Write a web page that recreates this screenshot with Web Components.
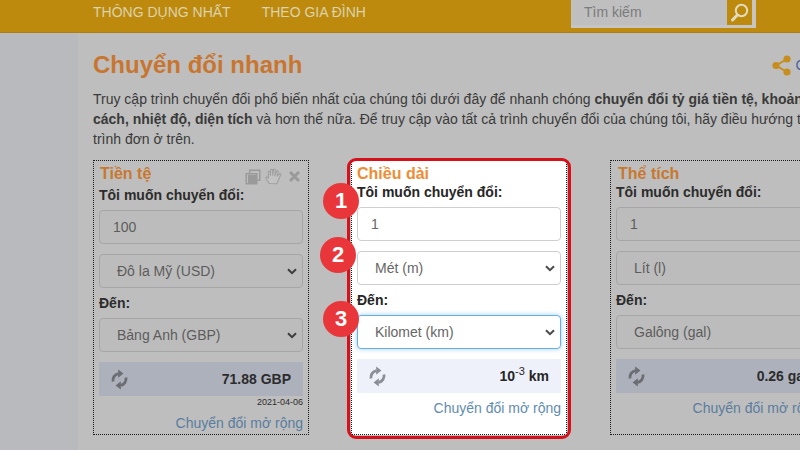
<!DOCTYPE html>
<html lang="vi">
<head>
<meta charset="utf-8">
<title>Chuyển đổi nhanh</title>
<style>
    html, body { margin: 0; height: 100%; overflow: hidden; }
    body { font-family: "Liberation Sans", Arial, sans-serif; background: #bebebe; }
</style>
</head>
<body>
<site-header>
    <a slot="nav">THÔNG DỤNG NHẤT</a>
    <a slot="nav">THEO GIA ĐÌNH</a>
</site-header>
<page-body>
    <page-title share="Chia sẻ">Chuyển đổi nhanh</page-title>
    <page-intro>Truy cập trình chuyển đổi phổ biến nhất của chúng tôi dưới đây để nhanh chóng <b>chuyển đổi tỷ giá tiền tệ, khoảng<br>cách, nhiệt độ, diện tích</b> và hơn thế nữa. Để truy cập vào tất cả trình chuyển đổi của chúng tôi, hãy điều hướng tới các<br>trình đơn ở trên.</page-intro>
    <card-row>
        <conv-card heading="Tiền tệ" tools>
            <conv-label>Tôi muốn chuyển đổi:</conv-label>
            <conv-field>100</conv-field>
            <conv-field select>Đô la Mỹ (USD)</conv-field>
            <conv-label>Đến:</conv-label>
            <conv-field select>Bảng Anh (GBP)</conv-field>
            <conv-result>71.88 GBP</conv-result>
            <conv-date>2021-04-06</conv-date>
            <conv-link>Chuyển đổi mở rộng</conv-link>
        </conv-card>
        <conv-card heading="Chiều dài" highlight>
            <step-badge style="--x:-29px;--y:22px">1</step-badge>
            <step-badge style="--x:-32px;--y:76px">2</step-badge>
            <step-badge style="--x:-29px;--y:140px">3</step-badge>
            <conv-label>Tôi muốn chuyển đổi:</conv-label>
            <conv-field>1</conv-field>
            <conv-field select>Mét (m)</conv-field>
            <conv-label>Đến:</conv-label>
            <conv-field select focused>Kilomet (km)</conv-field>
            <conv-result>10<sup>-3</sup> km</conv-result>
            <conv-link>Chuyển đổi mở rộng</conv-link>
        </conv-card>
        <conv-card heading="Thể tích">
            <conv-label>Tôi muốn chuyển đổi:</conv-label>
            <conv-field>1</conv-field>
            <conv-field select>Lít (l)</conv-field>
            <conv-label>Đến:</conv-label>
            <conv-field select>Galông (gal)</conv-field>
            <conv-result>0.26 gal</conv-result>
            <conv-link>Chuyển đổi mở rộng</conv-link>
        </conv-card>
    </card-row>
</page-body>

<script>
class SiteHeader extends HTMLElement {
    constructor() {
        super();
        this.attachShadow({ mode: 'open' });
    }

    connectedCallback() {
        this.shadowRoot.innerHTML = `
            <style>
                :host {
                    display: flex;
                    box-sizing: border-box;
                    height: 33px;
                    padding-left: 93px;
                    background: #bd8a0e;
                    border-bottom: 1px solid #ab7f17;
                }
                nav {
                    display: flex;
                    gap: 31px;
                    width: 272px;
                    flex: none;
                    height: 24px;
                    align-items: center;
                    font-size: 14px;
                    color: #dcd2ac;
                    white-space: nowrap;
                }
                search-box { margin-left: 206px; }
            </style>
            <nav><slot name="nav"></slot></nav>
            <search-box></search-box>
        `;
    }
}

class SearchBox extends HTMLElement {
    constructor() {
        super();
        this.attachShadow({ mode: 'open' });
    }

    connectedCallback() {
        this.shadowRoot.innerHTML = `
            <style>
                :host {
                    display: flex;
                    box-sizing: border-box;
                    width: 185px;
                    height: 28px;
                    background: #bfbfbf;
                    border: solid #c6c5c1;
                    border-width: 0 4px 3px 0;
                    font-size: 14px;
                    color: #7b7b7b;
                }
                span { flex: 1; padding-left: 13px; line-height: 24px; }
                div {
                    display: flex;
                    align-items: center;
                    justify-content: center;
                    width: 25px;
                    height: 25px;
                    background: #bd8a0e;
                }
            </style>
            <span>Tìm kiếm</span>
            <div>
                <svg width="21" height="21" viewBox="0 0 21 21" fill="none" stroke="#e2dcc0">
                    <circle cx="12.5" cy="8.5" r="5.7" stroke-width="2"/>
                    <path d="M8.3 13 L3.5 18" stroke-width="3" stroke-linecap="round"/>
                </svg>
            </div>
        `;
    }
}

class PageBody extends HTMLElement {
    constructor() {
        super();
        this.attachShadow({ mode: 'open' });
    }

    connectedCallback() {
        this.shadowRoot.innerHTML = `
            <style>
                :host {
                    display: block;
                    box-sizing: border-box;
                    height: 417px;
                    padding: 16px 0 0 93px;
                    /* grey sidebar strip on the left, page column after it */
                    background: linear-gradient(90deg, #b9babd 78px, #bebebe 78px);
                }
            </style>
            <slot></slot>
        `;
    }
}

class PageTitle extends HTMLElement {
    constructor() {
        super();
        this.attachShadow({ mode: 'open' });
    }

    connectedCallback() {
        this.shadowRoot.innerHTML = `
            <style>
                :host {
                    display: flex;
                    justify-content: space-between;
                    align-items: center;
                    width: 750px;
                    height: 32px;
                }
                h1 { margin: 0; font-size: 24px; font-weight: bold; color: #c8762f; }
                div { display: flex; align-items: center; gap: 5px; font-size: 14px; color: #4a5f9a; }
            </style>
            <h1><slot></slot></h1>
            <div>
                <svg width="19" height="21" viewBox="0 0 19 21" fill="#c78d1e">
                    <circle cx="15" cy="4" r="3.6"/>
                    <circle cx="4" cy="10.5" r="3.6"/>
                    <circle cx="15" cy="17" r="3.6"/>
                    <path d="M15 4 L4 10.5 L15 17" fill="none" stroke="#c78d1e" stroke-width="2"/>
                </svg>
                <span>${this.getAttribute('share')}</span>
            </div>
        `;
    }
}

class PageIntro extends HTMLElement {
    constructor() {
        super();
        this.attachShadow({ mode: 'open' });
    }

    connectedCallback() {
        this.shadowRoot.innerHTML = `
            <style>
                :host {
                    display: block;
                    margin-top: 8px;
                    font-size: 14px;
                    line-height: 20px;
                    color: #3a3a3a;
                    white-space: nowrap;
                }
            </style>
            <slot></slot>
        `;
    }
}

class CardRow extends HTMLElement {
    constructor() {
        super();
        this.attachShadow({ mode: 'open' });
    }

    connectedCallback() {
        this.shadowRoot.innerHTML = `
            <style>
                :host {
                    display: flex;
                    gap: 42px;
                    margin-top: 11px;
                    width: 800px;
                }
                ::slotted(:last-child) { margin-left: 1px; }
            </style>
            <slot></slot>
        `;
    }
}

class ConvCard extends HTMLElement {
    constructor() {
        super();
        this.attachShadow({ mode: 'open' });
    }

    connectedCallback() {
        const tools = this.hasAttribute('tools') ? `
            <div class="tools">
                <svg width="16" height="16" viewBox="0 0 16 16" fill="#9a9a9a">
                    <path d="M4 0.5 H15.5 V12 H12.5 V15.5 H0.5 V4 H4 Z M5.5 2 V4 H12.5 V10.5 H14 V2 Z M2 5.5 V14 H11 V5.5 Z"/>
                    <rect x="3" y="6" width="8" height="8"/>
                </svg>
                <svg width="17" height="17" viewBox="0 0 17 17" fill="#c2c2c2" stroke="#9f9f9f" stroke-width="1.1" stroke-linejoin="round">
                    <path d="M4.2 15.5 C3.2 13.5 0.9 11.6 0.9 9.9 C0.9 8.8 2.3 8.6 3.6 10.2 L3.2 4.2 C3.2 3 4.9 3 5.1 4.2 L5.5 7.5 L5.6 2.3 C5.7 1.1 7.5 1.1 7.6 2.3 L7.8 7.3 L8.5 1.9 C8.7 0.8 10.4 1 10.3 2.2 L9.9 7.6 L11.7 3.2 C12.2 2.2 13.6 2.7 13.3 3.9 L12.1 8.2 L14.3 6 C15.2 5.2 16.3 6.1 15.6 7.2 C14.5 9.1 13.9 11.5 12.9 13.2 C12.5 14 12.1 14.9 11.9 15.7 Z"/>
                </svg>
                <svg width="11" height="11" viewBox="0 0 11 11" stroke="#9a9a9a" stroke-width="3">
                    <path d="M1 1 L10 10 M10 1 L1 10"/>
                </svg>
            </div>` : '';

        this.shadowRoot.innerHTML = `
            <style>
                :host {
                    --card-bg: transparent;
                    --title-color: #c8782f;
                    --text-color: #2c2c2c;
                    --field-bg: #bcbcbc;
                    --field-border: #a6a6a6;
                    --field-text: #5c5c5c;
                    --result-bg: #adb1bc;
                    --icon-color: #6b6d72;
                    --link-color: #5a7d9f;
                    --chevron: #3c3c3c;
                    position: relative;
                    display: block;
                    flex: none;
                    box-sizing: border-box;
                    width: 216px;
                    height: 275px;
                    padding: 5px 5px 0;
                    background: var(--card-bg);
                    border: 1px dotted #1a1a1a;
                }
                :host([tools]) h2 { margin-bottom: 3px; padding-left: 1px; }
                :host(:last-child) h2 { padding-left: 2px; }
                :host([highlight]) {
                    --card-bg: #fff;
                    --title-color: #ee8d36;
                    --text-color: #262626;
                    --field-bg: #fff;
                    --field-border: #cfcfcf;
                    --field-text: #666;
                    --result-bg: #eef1fa;
                    --icon-color: #8b8e96;
                    --link-color: #5f8cb0;
                    --chevron: #4a4a4a;
                }
                :host([highlight])::after {
                    content: '';
                    position: absolute;
                    inset: -3px -5px -5px -5px;
                    border: 3px solid #d5121c;
                    border-radius: 9px;
                    pointer-events: none;
                }
                h2 { margin: 0; font-size: 16px; line-height: 16px; font-weight: bold; color: var(--title-color); }
                .tools {
                    position: absolute;
                    top: 7px;
                    left: 151px;
                    display: flex;
                    align-items: center;
                    gap: 4px;
                }
                .tools svg:last-child { margin-left: 3px; }
            </style>
            <h2>${this.getAttribute('heading')}</h2>
            ${tools}
            <slot></slot>
        `;
    }
}

class ConvLabel extends HTMLElement {
    constructor() {
        super();
        this.attachShadow({ mode: 'open' });
    }

    connectedCallback() {
        this.shadowRoot.innerHTML = `
            <style>
                :host {
                    display: block;
                    margin-bottom: 5px;
                    font-size: 14px;
                    line-height: 20px;
                    font-weight: bold;
                    color: var(--text-color);
                }
                :host(:not(:first-of-type)) { margin-top: -5px; }
            </style>
            <slot></slot>
        `;
    }
}

class ConvField extends HTMLElement {
    constructor() {
        super();
        this.attachShadow({ mode: 'open' });
    }

    connectedCallback() {
        const chevron = this.hasAttribute('select') ? `
            <svg width="10" height="7" viewBox="0 0 10 7" fill="none" stroke="var(--chevron)" stroke-width="2">
                <path d="M1 1.2 L5 5.2 L9 1.2"/>
            </svg>` : '';

        this.shadowRoot.innerHTML = `
            <style>
                :host {
                    display: flex;
                    align-items: center;
                    justify-content: space-between;
                    box-sizing: border-box;
                    height: 34px;
                    margin-bottom: 10px;
                    padding: 0 5px 0 13px;
                    background: var(--field-bg);
                    border: 1px solid var(--field-border);
                    border-radius: 4px;
                    font-size: 14px;
                    color: var(--field-text);
                }
                :host([select]) { padding-left: 17px; }
                :host([focused]) {
                    border-color: #66afe9;
                    box-shadow: 0 0 5px rgba(102, 175, 233, 0.6);
                }
            </style>
            <span><slot></slot></span>
            ${chevron}
        `;
    }
}

class ConvResult extends HTMLElement {
    constructor() {
        super();
        this.attachShadow({ mode: 'open' });
    }

    connectedCallback() {
        this.shadowRoot.innerHTML = `
            <style>
                :host {
                    display: flex;
                    align-items: center;
                    justify-content: space-between;
                    height: 34px;
                    padding: 0 12px;
                    background: var(--result-bg);
                    font-size: 14px;
                    font-weight: bold;
                    color: var(--text-color);
                }
                ::slotted(sup) { font-size: 11px; font-weight: normal; line-height: 0; }
            </style>
            <svg width="17" height="21" viewBox="0 0 17 21">
                <g fill="none" stroke="var(--icon-color)" stroke-width="2.8">
                    <path d="M2 12.5 A6.8 6.8 0 0 1 7.5 4.6"/>
                    <path d="M15 8.5 A6.8 6.8 0 0 1 9.5 16.4"/>
                </g>
                <g fill="var(--icon-color)">
                    <path d="M7.2 0.4 L12.4 4.6 L7.2 8.8 Z"/>
                    <path d="M9.8 12.2 L4.6 16.4 L9.8 20.6 Z"/>
                </g>
            </svg>
            <span><slot></slot></span>
        `;
    }
}

class ConvDate extends HTMLElement {
    constructor() {
        super();
        this.attachShadow({ mode: 'open' });
    }

    connectedCallback() {
        this.shadowRoot.innerHTML = `
            <style>
                :host {
                    display: block;
                    height: 12px;
                    font-size: 9px;
                    line-height: 12px;
                    text-align: right;
                    color: var(--text-color);
                }
            </style>
            <slot></slot>
        `;
    }
}

class ConvLink extends HTMLElement {
    constructor() {
        super();
        this.attachShadow({ mode: 'open' });
    }

    connectedCallback() {
        this.shadowRoot.innerHTML = `
            <style>
                :host {
                    display: block;
                    margin-top: 5px;
                    font-size: 14px;
                    line-height: 20px;
                    text-align: right;
                    color: var(--link-color);
                    white-space: nowrap;
                }
            </style>
            <slot></slot>
        `;
    }
}

class StepBadge extends HTMLElement {
    constructor() {
        super();
        this.attachShadow({ mode: 'open' });
    }

    connectedCallback() {
        this.shadowRoot.innerHTML = `
            <style>
                :host {
                    position: absolute;
                    left: var(--x);
                    top: var(--y);
                    z-index: 2;
                    display: flex;
                    align-items: center;
                    justify-content: center;
                    width: 36px;
                    height: 36px;
                    border-radius: 50%;
                    background: #e9363a;
                    font-size: 22px;
                    font-weight: bold;
                    color: #fff;
                }
            </style>
            <slot></slot>
        `;
    }
}

customElements.define('site-header', SiteHeader);
customElements.define('search-box', SearchBox);
customElements.define('page-body', PageBody);
customElements.define('page-title', PageTitle);
customElements.define('page-intro', PageIntro);
customElements.define('card-row', CardRow);
customElements.define('conv-card', ConvCard);
customElements.define('conv-label', ConvLabel);
customElements.define('conv-field', ConvField);
customElements.define('conv-result', ConvResult);
customElements.define('conv-date', ConvDate);
customElements.define('conv-link', ConvLink);
customElements.define('step-badge', StepBadge);
</script>
</body>
</html>
